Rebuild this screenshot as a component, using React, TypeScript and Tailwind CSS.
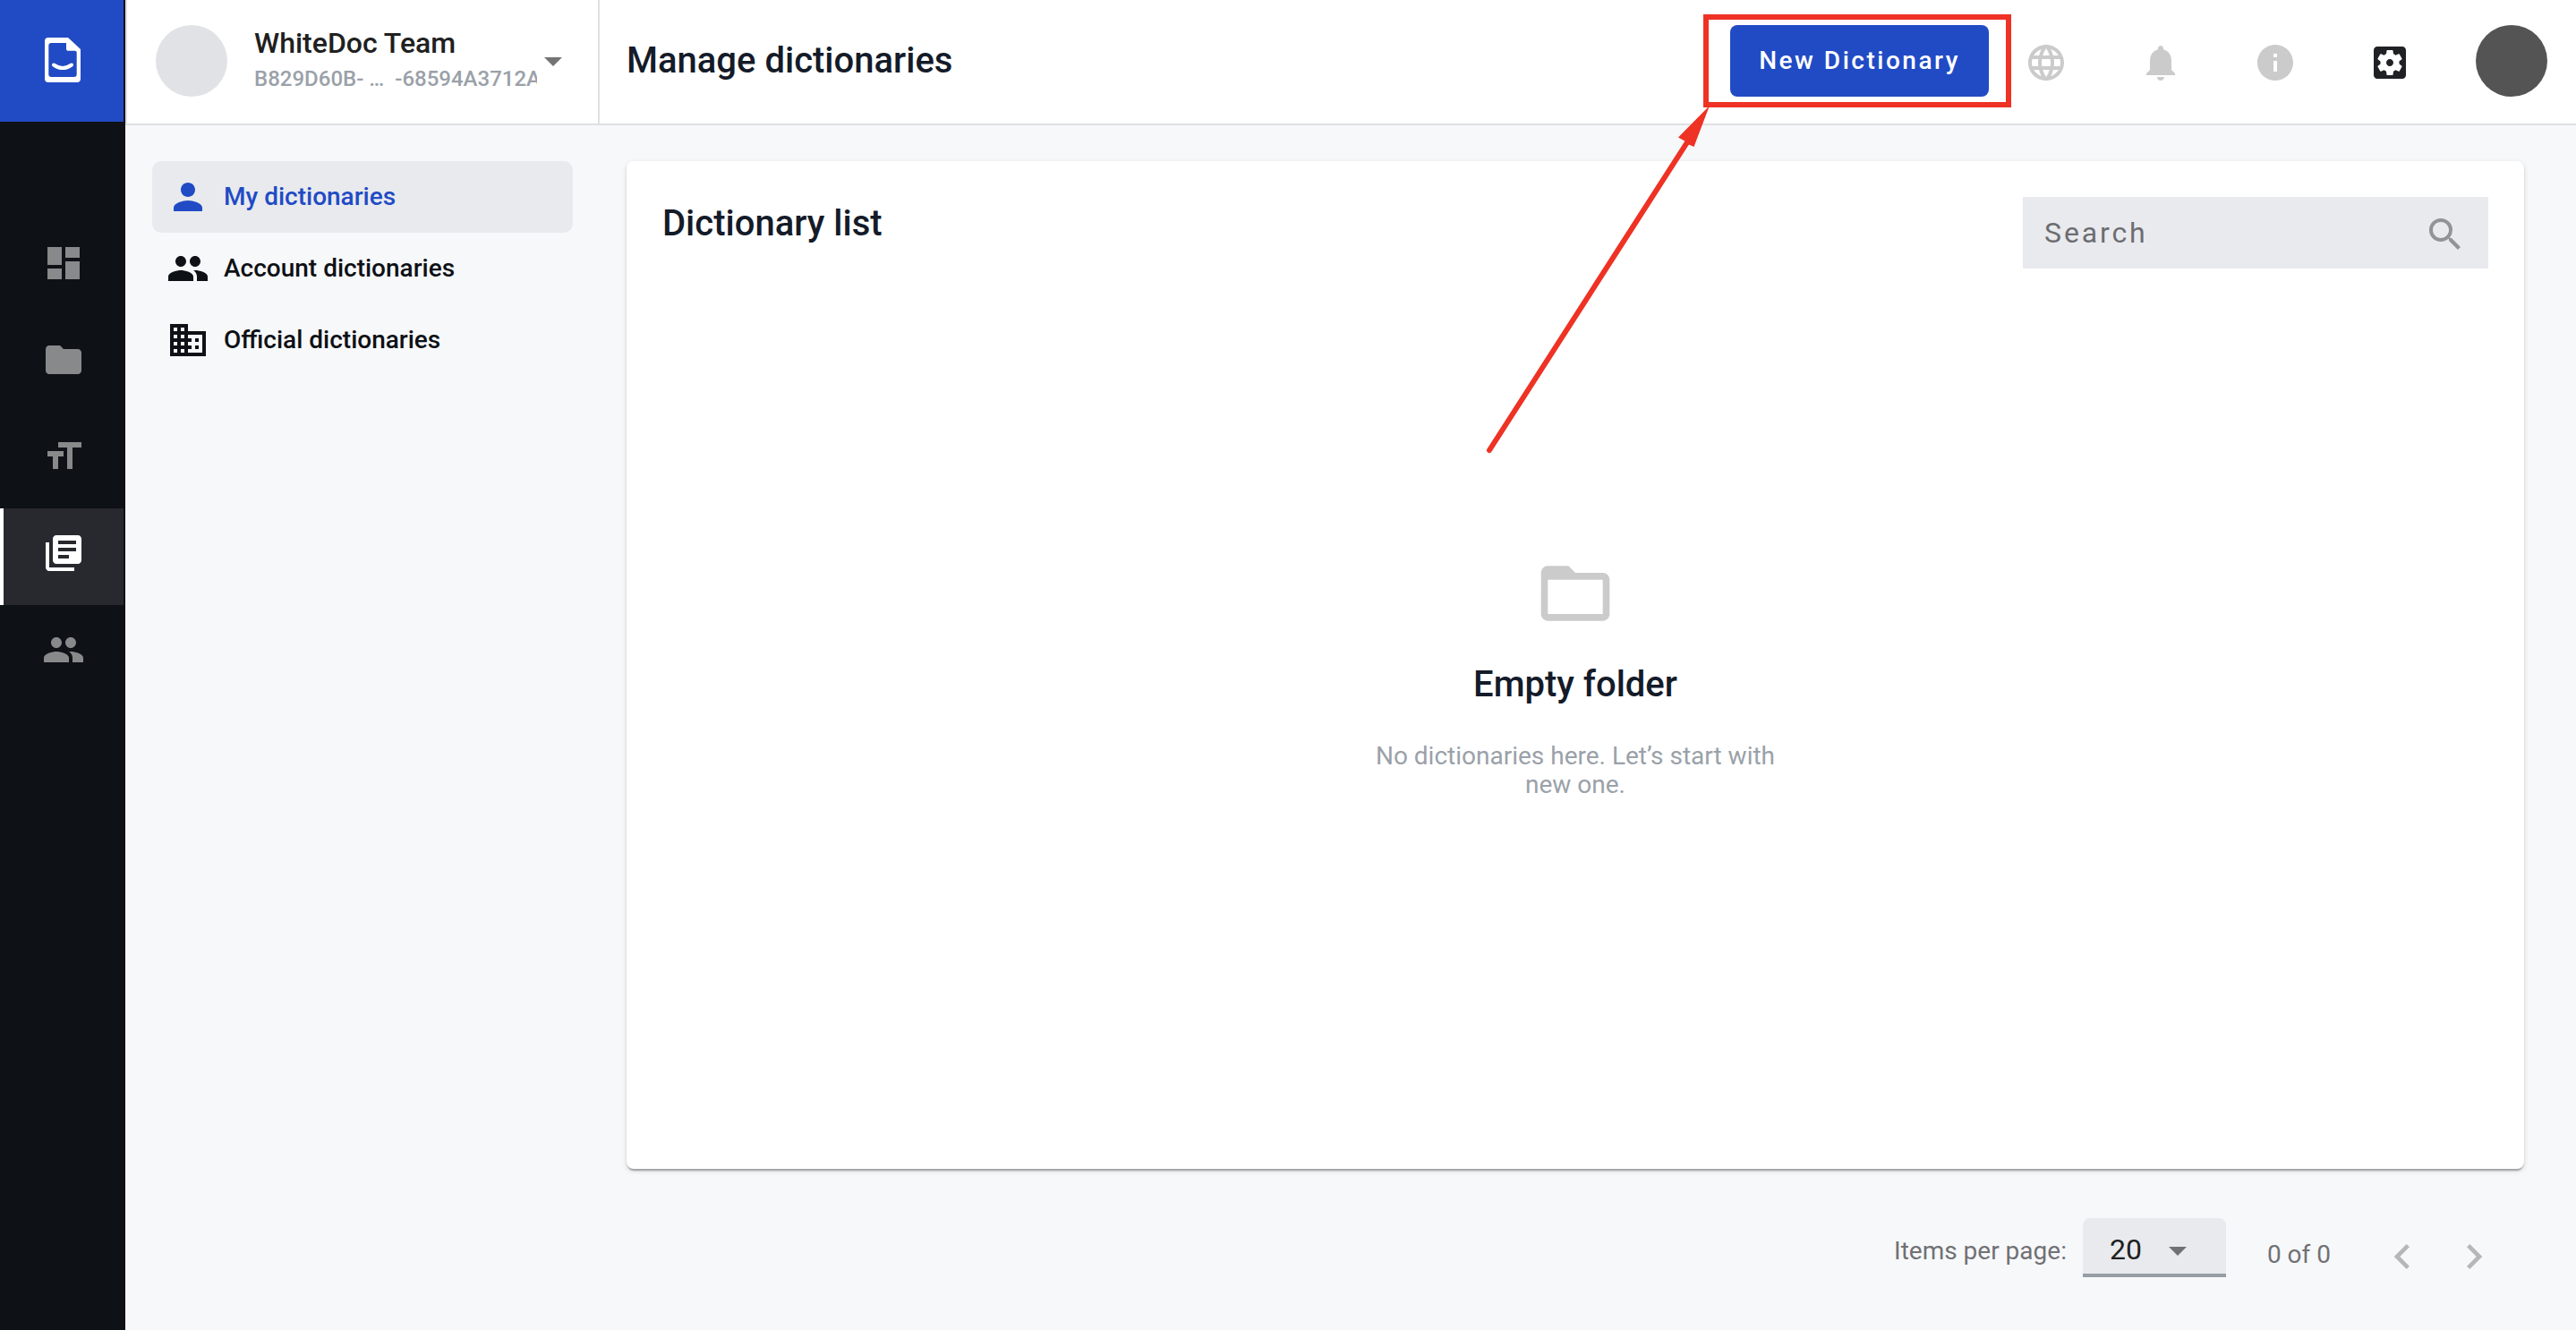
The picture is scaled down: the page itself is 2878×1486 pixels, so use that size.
import React from "react";
import type { IconType } from "react-icons";
import {
  MdArrowDropDown,
  MdBusiness,
  MdChevronLeft,
  MdChevronRight,
  MdDashboard,
  MdFolder,
  MdFolderOpen,
  MdFormatSize,
  MdInfo,
  MdLanguage,
  MdLibraryBooks,
  MdNotifications,
  MdPeople,
  MdPerson,
  MdSearch,
} from "react-icons/md";

type NavItem = { label: string; Icon: IconType; active?: boolean };

const railItems: NavItem[] = [
  { label: "Dashboard", Icon: MdDashboard },
  { label: "Documents", Icon: MdFolder },
  { label: "Templates", Icon: MdFormatSize },
  { label: "Dictionaries", Icon: MdLibraryBooks, active: true },
  { label: "Contacts", Icon: MdPeople },
];

const sections: NavItem[] = [
  { label: "My dictionaries", Icon: MdPerson, active: true },
  { label: "Account dictionaries", Icon: MdPeople },
  { label: "Official dictionaries", Icon: MdBusiness },
];

function Logo() {
  return (
    <svg viewBox="0 0 40 50" className="h-[50px] w-10" aria-hidden="true">
      <path
        fillRule="evenodd"
        fill="#fff"
        d="M4 0h22L40 13V46a4 4 0 0 1-4 4H4a4 4 0 0 1-4-4V4a4 4 0 0 1 4-4Zm3.300 6a3 3 0 0 0-3 3v32a3 3 0 0 0 3 3h25.400a3 3 0 0 0 3-3V16.700a2 2 0 0 0-2-2H26a2 2 0 0 1-2-2V6Z"
      />
      <path d="M10 30.500Q20 37.500 30 30.500" fill="none" stroke="#fff" strokeWidth="4" strokeLinecap="round" />
    </svg>
  );
}

function SettingsIcon() {
  return (
    <svg viewBox="0 0 24 24" className="size-12" fill="currentColor" aria-hidden="true">
      <path d="M12 10c-1.100 0-2 .9-2 2s.9 2 2 2 2-.9 2-2-.9-2-2-2zm7-7H5c-1.110 0-2 .9-2 2v14c0 1.100.89 2 2 2h14c1.110 0 2-.9 2-2V5c0-1.100-.89-2-2-2zm-1.750 9c0 .23-.02.46-.05.68l1.480 1.160c.13.11.17.3.08.45l-1.400 2.420c-.09.15-.27.21-.43.15l-1.740-.7c-.36.28-.76.51-1.180.69l-.26 1.850c-.03.17-.18.3-.35.3h-2.800c-.17 0-.32-.13-.35-.29l-.26-1.850c-.43-.18-.82-.41-1.180-.69l-1.740.7c-.16.06-.34 0-.43-.15l-1.400-2.420c-.09-.15-.05-.34.08-.45l1.480-1.160c-.03-.23-.05-.46-.05-.69 0-.23.02-.46.05-.68l-1.480-1.160c-.13-.11-.17-.3-.08-.45l1.400-2.420c.09-.15.27-.21.43-.15l1.740.7c.36-.28.76-.51 1.180-.69l.26-1.850c.03-.17.18-.3.35-.3h2.800c.17 0 .32.13.35.29l.26 1.850c.43.18.82.41 1.180.69l1.740-.7c.16-.06.34 0 .43.15l1.400 2.420c.09.15.05.34-.08.45l-1.480 1.160c.03.23.05.46.05.69z" />
    </svg>
  );
}

function Rail() {
  return (
    <nav aria-label="Main" className="w-[140px] shrink-0 border-r-2 border-[#0e1116] bg-[#0e1116]">
      <a href="#home" aria-label="Home" className="flex h-[136px] items-center justify-center bg-[#214bc4] pb-0.5 pl-0.5">
        <Logo />
      </a>
      <ul className="pt-[108px]">
        {railItems.map(({ label, Icon, active }) => (
          <li key={label}>
            <a
              href={"#" + label.toLowerCase()}
              aria-label={label}
              className={
                active
                  ? "flex h-[108px] items-center justify-center border-l-4 border-white bg-[#28292e] pb-2 text-white"
                  : "flex h-[108px] items-center justify-center border-l-4 border-transparent pb-2 text-[#87898b]"
              }
            >
              <Icon className="size-12" />
            </a>
          </li>
        ))}
      </ul>
    </nav>
  );
}

function Callout() {
  return (
    <>
      <span className="pointer-events-none absolute -top-3 -right-[25px] -bottom-3 -left-[30px] border-[6px] border-[#ee3224]" />
      <svg
        viewBox="0 0 260 400"
        className="pointer-events-none absolute top-[86px] right-[311px] z-10 h-[400px] w-[260px]"
        aria-hidden="true"
      >
        <path d="M13 389 234 45" stroke="#ee3224" strokeWidth="6" strokeLinecap="round" />
        <path d="M259 4 224 39.500 232 44 234 47 237 48 241.500 50Z" fill="#ee3224" />
      </svg>
    </>
  );
}

function Header() {
  return (
    <header className="flex h-[140px] shrink-0 border-b-2 border-[#dfe0e4] bg-white">
      <button
        type="button"
        className="flex w-[530px] shrink-0 items-center border-x-2 border-[#dfe0e4] pb-0.5 pl-8 text-left"
      >
        <span className="size-20 shrink-0 rounded-full bg-[#e1e2e6]" />
        <span className="ml-[30px] w-[316px] shrink-0 overflow-hidden pb-1 font-medium whitespace-nowrap">
          <span className="block text-[32px] leading-[44px] text-[#202020]">WhiteDoc Team</span>
          <span className="block text-2xl leading-9 text-[#9aa1a9]">
            B829D60B- …&nbsp; -68594A3712A
          </span>
        </span>
        <MdArrowDropDown className="-ml-1.5 size-12 shrink-0 text-[#747474]" />
      </button>
      <div className="flex flex-1 items-center pr-8 pb-0.5 pl-[30px]">
        <h1 className="flex-1 text-[40px] leading-[48px] font-medium text-[#141b29]">Manage dictionaries</h1>
        <div className="relative mr-10">
          <button
            type="button"
            className="h-20 rounded-lg bg-[#214bc4] px-8 text-[28px] font-medium tracking-[0.09em] text-white"
          >
            New Dictionary
          </button>
          <Callout />
        </div>
        <div className="flex items-center gap-20 pt-1 text-[#cbcbcb]">
          <button type="button" aria-label="Language">
            <MdLanguage className="size-12" />
          </button>
          <button type="button" aria-label="Notifications">
            <MdNotifications className="size-12" />
          </button>
          <button type="button" aria-label="Information">
            <MdInfo className="size-12" />
          </button>
          <button type="button" aria-label="Settings" className="text-[#202124]">
            <SettingsIcon />
          </button>
        </div>
        <button type="button" aria-label="Profile" className="ml-[72px] size-20 rounded-full bg-[#545454]" />
      </div>
    </header>
  );
}

function SectionNav() {
  return (
    <nav aria-label="Dictionary sections" className="w-[530px] shrink-0 px-[30px]">
      <ul>
        {sections.map(({ label, Icon, active }) => (
          <li key={label}>
            <a
              href={"#" + label.toLowerCase().replace(" ", "-")}
              className={
                active
                  ? "flex h-20 items-center gap-4 rounded-[10px] bg-[#e9eaee] px-4 text-[28px] font-medium text-[#214bc4]"
                  : "flex h-20 items-center gap-4 rounded-[10px] px-4 text-[28px] font-medium text-[#0e1116]"
              }
            >
              <Icon className="size-12" />
              {label}
            </a>
          </li>
        ))}
      </ul>
    </nav>
  );
}

function DictionaryCard() {
  return (
    <section className="flex flex-1 flex-col rounded-lg bg-white px-10 pt-10 shadow-[0_4px_2px_-2px_rgba(0,0,0,0.2),0_2px_2px_rgba(0,0,0,0.14),0_2px_6px_rgba(0,0,0,0.12)]">
      <div className="flex items-start justify-between">
        <h2 className="py-1.5 text-[40px] leading-[48px] font-medium text-[#141b29]">Dictionary list</h2>
        <label className="flex h-20 w-[520px] items-center bg-[#e9eaee] px-6">
          <input
            type="text"
            aria-label="Search"
            placeholder="Search"
            className="min-w-0 flex-1 bg-transparent text-[32px] tracking-[0.09em] outline-none placeholder:text-[#6c6d70]"
          />
          <MdSearch className="mt-1 size-12 text-[#929396]" />
        </label>
      </div>
      <div className="flex flex-1 flex-col items-center justify-center pb-24 text-center">
        <MdFolderOpen className="size-[92px] text-[#cbcbcb]" />
        <h3 className="mt-8 text-[40px] leading-[48px] font-medium text-[#141b29]">Empty folder</h3>
        <p className="mt-10 w-[480px] text-[28px] leading-8 text-[#9aa1a9]">
          No dictionaries here. Let’s start with new one.
        </p>
      </div>
    </section>
  );
}

function Pagination() {
  return (
    <footer className="flex h-[180px] shrink-0 items-center justify-end pr-4 text-[28px] text-[#707174]">
      <label htmlFor="page-size" className="pt-1">Items per page:</label>
      <div className="relative ml-[18px] pb-1">
        <select
          id="page-size"
          defaultValue="20"
          className="h-[66px] w-40 appearance-none rounded-t-lg border-b-4 border-[#979da5] bg-[#e9eaee] pt-2 pl-[30px] text-[32px] text-[#202020]"
        >
          <option>20</option>
          <option>50</option>
        </select>
        <MdArrowDropDown className="pointer-events-none absolute top-3 right-[30px] size-12" />
      </div>
      <span className="ml-[46px] pt-3">0 of 0</span>
      <div className="ml-10 flex pt-4 text-[#b5b7b9]">
        <button type="button" aria-label="Previous page" className="flex size-20 items-center justify-center">
          <MdChevronLeft className="size-14" />
        </button>
        <button type="button" aria-label="Next page" className="flex size-20 items-center justify-center">
          <MdChevronRight className="size-14" />
        </button>
      </div>
    </footer>
  );
}

export default function App() {
  return (
    <div className="flex min-h-screen bg-[#f7f8fa] font-['Roboto',sans-serif]">
      <Rail />
      <div className="flex min-w-0 flex-1 flex-col">
        <Header />
        <div className="flex flex-1 pt-10">
          <SectionNav />
          <main className="flex min-w-0 flex-1 flex-col pr-[58px] pl-[30px]">
            <DictionaryCard />
            <Pagination />
          </main>
        </div>
      </div>
    </div>
  );
}
